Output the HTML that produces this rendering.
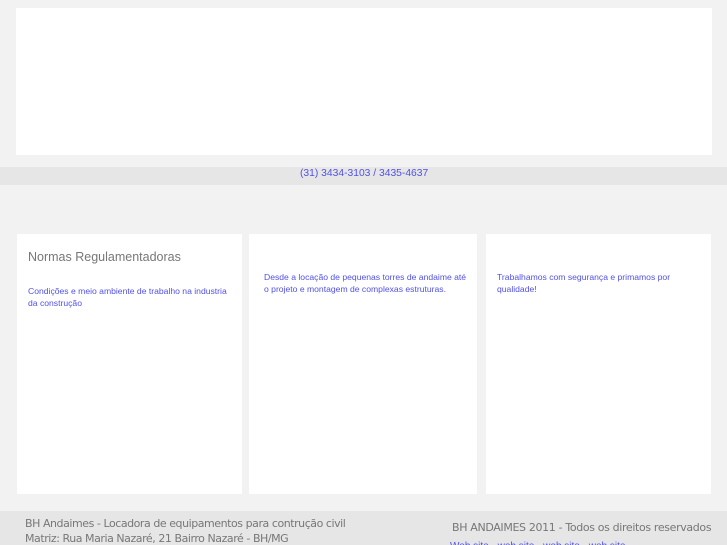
<!DOCTYPE html>
<html><head><meta charset="utf-8"><style>
html,body{margin:0;width:727px;height:545px;overflow:hidden}
body{background:#f2f2f2;position:relative;font-family:"Liberation Sans",sans-serif}
.a{position:absolute}
.w{background:#fff}
.b{color:#5151e8;font-size:8.6px;line-height:12px}
.f{font-family:"DejaVu Sans",sans-serif;color:#777;font-size:11px;letter-spacing:-0.45px;white-space:nowrap}
</style></head><body>
<div class="a w" style="left:16px;top:8px;width:696px;height:147px"></div>
<div class="a" style="left:0;top:167px;width:727px;height:18px;background:#e6e6e6"></div>
<div class="a" style="left:300px;top:168px;color:#5151e8;font-size:10.3px;line-height:12px">(31) 3434-3103 / 3435-4637</div>
<div class="a w" style="left:17px;top:234px;width:225px;height:260px"></div>
<div class="a w" style="left:249px;top:234px;width:228px;height:260px"></div>
<div class="a w" style="left:486px;top:234px;width:225px;height:260px"></div>
<div class="a" style="left:28px;top:250px;color:#777;font-size:12.5px">Normas Regulamentadoras</div>
<div class="a b" style="left:28px;top:285px;width:205px">Condições e meio ambiente de trabalho na industria da construção</div>
<div class="a b" style="left:264px;top:271px;width:205px">Desde a locação de pequenas torres de andaime até o projeto e montagem de complexas estruturas.</div>
<div class="a b" style="left:497px;top:271px;width:180px">Trabalhamos com segurança e primamos por qualidade!</div>
<div class="a" style="left:0;top:511px;width:727px;height:34px;background:#e6e6e6"></div>
<div class="a f" style="left:25px;top:516px;line-height:15px">BH Andaimes - Locadora de equipamentos para contrução civil<br>Matriz: Rua Maria Nazaré, 21 Bairro Nazaré - BH/MG</div>
<div class="a f" style="left:452px;top:521px;letter-spacing:-0.35px">BH ANDAIMES 2011 - Todos os direitos reservados</div>
<div class="a b" style="left:450px;top:541px;font-size:10px;white-space:nowrap">Web site · web site · web site · web site</div>
</body></html>
